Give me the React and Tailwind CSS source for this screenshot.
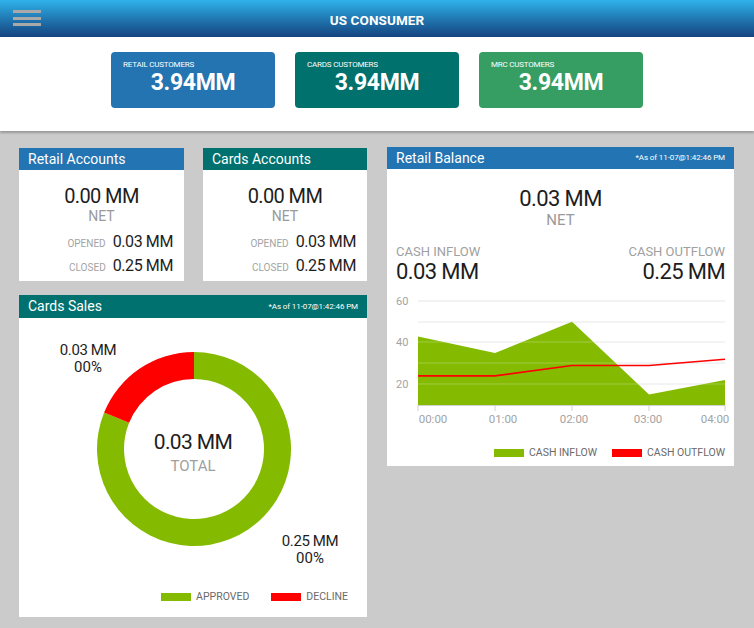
import React from "react";

const FONT = { fontFamily: "Roboto, 'Noto Sans', sans-serif" };

function Kpi({ label, color }) {
  return (
    <div className={`w-[164px] h-[56px] rounded-[4px] px-[12px] pt-[8px] text-white ${color}`}>
      <div className="text-[8px] leading-[10px] tracking-[-0.2px]">{label}</div>
      <div className="text-[23px] font-bold leading-[26px] text-center tracking-[-0.3px]">3.94MM</div>
    </div>
  );
}

function PanelHeader({ title, color, stamp }) {
  return (
    <div className={`h-[22px] flex items-center justify-between pl-[9px] pr-[9px] text-white ${color}`}>
      <span className="text-[14px] leading-[22px]">{title}</span>
      {stamp && <span className="text-[8px] leading-[10px] tracking-[-0.1px]">*As of 11-07@1:42:46 PM</span>}
    </div>
  );
}

function Accounts({ title, color, w }) {
  return (
    <div className={`${w} h-[133px] bg-white`}>
      <PanelHeader title={title} color={color} />
      <div className="pt-[14px]">
        <div className="text-center text-[20px] leading-[24px] text-[#1d1d1d] tracking-[-0.6px]">0.00 MM</div>
        <div className="text-center text-[14px] leading-[16px] text-[#9a9a9a]">NET</div>
        <div className="mt-[6px] pr-[11px]">
          <div className="h-[24px] flex items-baseline justify-end gap-[7px]">
            <span className="text-[10px] text-[#a3a3a3]">OPENED</span>
            <span className="text-[16px] leading-[24px] text-[#1d1d1d] tracking-[-0.4px]">0.03 MM</span>
          </div>
          <div className="h-[24px] flex items-baseline justify-end gap-[7px]">
            <span className="text-[10px] text-[#a3a3a3]">CLOSED</span>
            <span className="text-[16px] leading-[24px] text-[#1d1d1d] tracking-[-0.4px]">0.25 MM</span>
          </div>
        </div>
      </div>
    </div>
  );
}

function LegendItem({ color, label }) {
  return (
    <div className="flex items-center gap-[5px]">
      <span className={`w-[30px] h-[8px] ${color}`}></span>
      <span className="text-[10.5px] leading-[12px] text-[#6a6a6a]">{label}</span>
    </div>
  );
}

function CardsSales() {
  const green = "#84bb00";
  return (
    <div className="w-[348px] h-[322px] bg-white">
      <div className="h-[23px] flex items-center justify-between pl-[9px] pr-[9px] text-white bg-[#00716e]">
        <span className="text-[14px] leading-[23px]">Cards Sales</span>
        <span className="text-[8px] leading-[10px] tracking-[-0.1px]">*As of 11-07@1:42:46 PM</span>
      </div>
      <svg width="348" height="260" viewBox="0 0 348 260" className="block">
        <path d="M 175 34 A 97 97 0 1 1 85.1 94.6 L 110.1 104.8 A 70 70 0 1 0 175 61 Z" fill={green} />
        <path d="M 175 34 A 97 97 0 0 0 85.1 94.6 L 110.1 104.8 A 70 70 0 0 1 175 61 Z" fill="#ff0000" />
        <g fontFamily="Roboto, 'Noto Sans', sans-serif">
          <text x="69" y="32" textAnchor="middle" dominantBaseline="central" fontSize="15" fill="#1d1d1d" letterSpacing="-0.4">0.03 MM</text>
          <text x="69" y="49" textAnchor="middle" dominantBaseline="central" fontSize="15" fill="#1d1d1d">00%</text>
          <text x="291" y="223" textAnchor="middle" dominantBaseline="central" fontSize="15" fill="#1d1d1d" letterSpacing="-0.4">0.25 MM</text>
          <text x="291" y="240" textAnchor="middle" dominantBaseline="central" fontSize="15" fill="#1d1d1d">00%</text>
          <text x="174" y="124" textAnchor="middle" dominantBaseline="central" fontSize="21" fill="#1d1d1d" letterSpacing="-0.6">0.03 MM</text>
          <text x="174" y="148" textAnchor="middle" dominantBaseline="central" fontSize="15" fill="#a0a0a0">TOTAL</text>
        </g>
      </svg>
      <div className="mt-[13px] flex justify-end gap-[22px] pr-[19px]">
        <LegendItem color="bg-[#84bb00]" label="APPROVED" />
        <LegendItem color="bg-[#ff0000]" label="DECLINE" />
      </div>
    </div>
  );
}

function RetailBalance() {
  const xs = [31, 108, 185, 262, 338];
  const inflow = [43, 35, 50, 15, 22];
  const outflow = [24, 24, 29, 29, 32];
  const y = (v) => 115 - (v - 10) * 2.08;
  const areaPts =
    `${xs[0]},115 ` + xs.map((x, i) => `${x},${y(inflow[i]).toFixed(1)}`).join(" ") + ` ${xs[4]},115`;
  const linePts = xs.map((x, i) => `${x},${y(outflow[i]).toFixed(1)}`).join(" ");
  const grid = [11, 32, 52, 73, 94];
  const xl = [
    { t: "00:00", x: 46 },
    { t: "01:00", x: 116 },
    { t: "02:00", x: 187 },
    { t: "03:00", x: 261 },
    { t: "04:00", x: 328 },
  ];
  return (
    <div className="w-[347px] h-[319px] bg-white">
      <PanelHeader title="Retail Balance" color="bg-[#2374b2]" stamp />
      <div className="pt-[17px]">
        <div className="text-center text-[22px] leading-[26px] text-[#1d1d1d] tracking-[-0.6px]">0.03 MM</div>
        <div className="text-center text-[15px] leading-[16px] text-[#9a9a9a]">NET</div>
        <div className="mt-[16px] flex justify-between px-[9px]">
          <div>
            <div className="text-[13px] leading-[16px] text-[#a0a0a0]">CASH INFLOW</div>
            <div className="text-[22px] leading-[24px] text-[#1d1d1d] tracking-[-0.6px]">0.03 MM</div>
          </div>
          <div className="text-right">
            <div className="text-[13px] leading-[16px] text-[#a0a0a0]">CASH OUTFLOW</div>
            <div className="text-[22px] leading-[24px] text-[#1d1d1d] tracking-[-0.6px]">0.25 MM</div>
          </div>
        </div>
        <svg width="347" height="137" viewBox="0 0 347 137" className="block mt-[6px]">
          {grid.map((g) => (
            <line key={g} x1="31" x2="338" y1={g} y2={g} stroke="#e6e6e6" strokeWidth="1" />
          ))}
          <polygon points={areaPts} fill="#84bb00" />
          {grid.slice(1).map((g) => (
            <line key={"o" + g} x1="31" x2="338" y1={g} y2={g} stroke="#ffffff" strokeOpacity="0.25" strokeWidth="1" />
          ))}
          <polyline points={linePts} fill="none" stroke="#ff0000" strokeWidth="1.6" />
          <line x1="31" x2="338" y1="115.5" y2="115.5" stroke="#d0d0d0" strokeWidth="1" />
          {xs.map((x) => (
            <line key={"t" + x} x1={x} x2={x} y1="115" y2="121" stroke="#d0d0d0" strokeWidth="1" />
          ))}
          <g fontFamily="Roboto, 'Noto Sans', sans-serif" fill="#a3a3a3">
            <text x="9" y="11" fontSize="11" dominantBaseline="central">60</text>
            <text x="9" y="52" fontSize="11" dominantBaseline="central">40</text>
            <text x="9" y="94" fontSize="11" dominantBaseline="central">20</text>
            {xl.map((l) => (
              <text key={l.t} x={l.x} y="129" fontSize="11.5" textAnchor="middle" dominantBaseline="central">{l.t}</text>
            ))}
          </g>
        </svg>
        <div className="mt-[20px] flex justify-end gap-[15px] pr-[9px]">
          <LegendItem color="bg-[#84bb00]" label="CASH INFLOW" />
          <LegendItem color="bg-[#ff0000]" label="CASH OUTFLOW" />
        </div>
      </div>
    </div>
  );
}

export default function App() {
  return (
    <div style={FONT} className="w-[754px] h-[628px] bg-[#cbcbcb] overflow-hidden">
      <div className="relative h-[37px] bg-gradient-to-b from-[#2fb3ea] to-[#15437f] flex items-center justify-center">
        <div className="absolute left-[13px] top-[10px] flex flex-col gap-[3.5px]">
          <span className="block w-[28px] h-[3px] bg-[#a9a9a9]"></span>
          <span className="block w-[28px] h-[3px] bg-[#a9a9a9]"></span>
          <span className="block w-[28px] h-[3px] bg-[#a9a9a9]"></span>
        </div>
        <span className="text-white font-bold text-[13.5px] pt-[3px] tracking-[0.1px]">US CONSUMER</span>
      </div>
      <div className="h-[94px] bg-white flex justify-center gap-[20px] pt-[15px] shadow-[0_2px_2px_rgba(0,0,0,0.25)] relative">
        <Kpi label="RETAIL CUSTOMERS" color="bg-[#2374b0]" />
        <Kpi label="CARDS CUSTOMERS" color="bg-[#00716d]" />
        <Kpi label="MRC CUSTOMERS" color="bg-[#369e63]" />
      </div>
      <div className="flex items-start gap-[20px] pl-[19px] pt-[16px]">
        <div className="w-[348px] mt-[1px] flex flex-col gap-[14px]">
          <div className="flex gap-[19px]">
            <Accounts title="Retail Accounts" color="bg-[#2374b2]" w="w-[165px]" />
            <Accounts title="Cards Accounts" color="bg-[#00716e]" w="w-[164px]" />
          </div>
          <CardsSales />
        </div>
        <RetailBalance />
      </div>
    </div>
  );
}
